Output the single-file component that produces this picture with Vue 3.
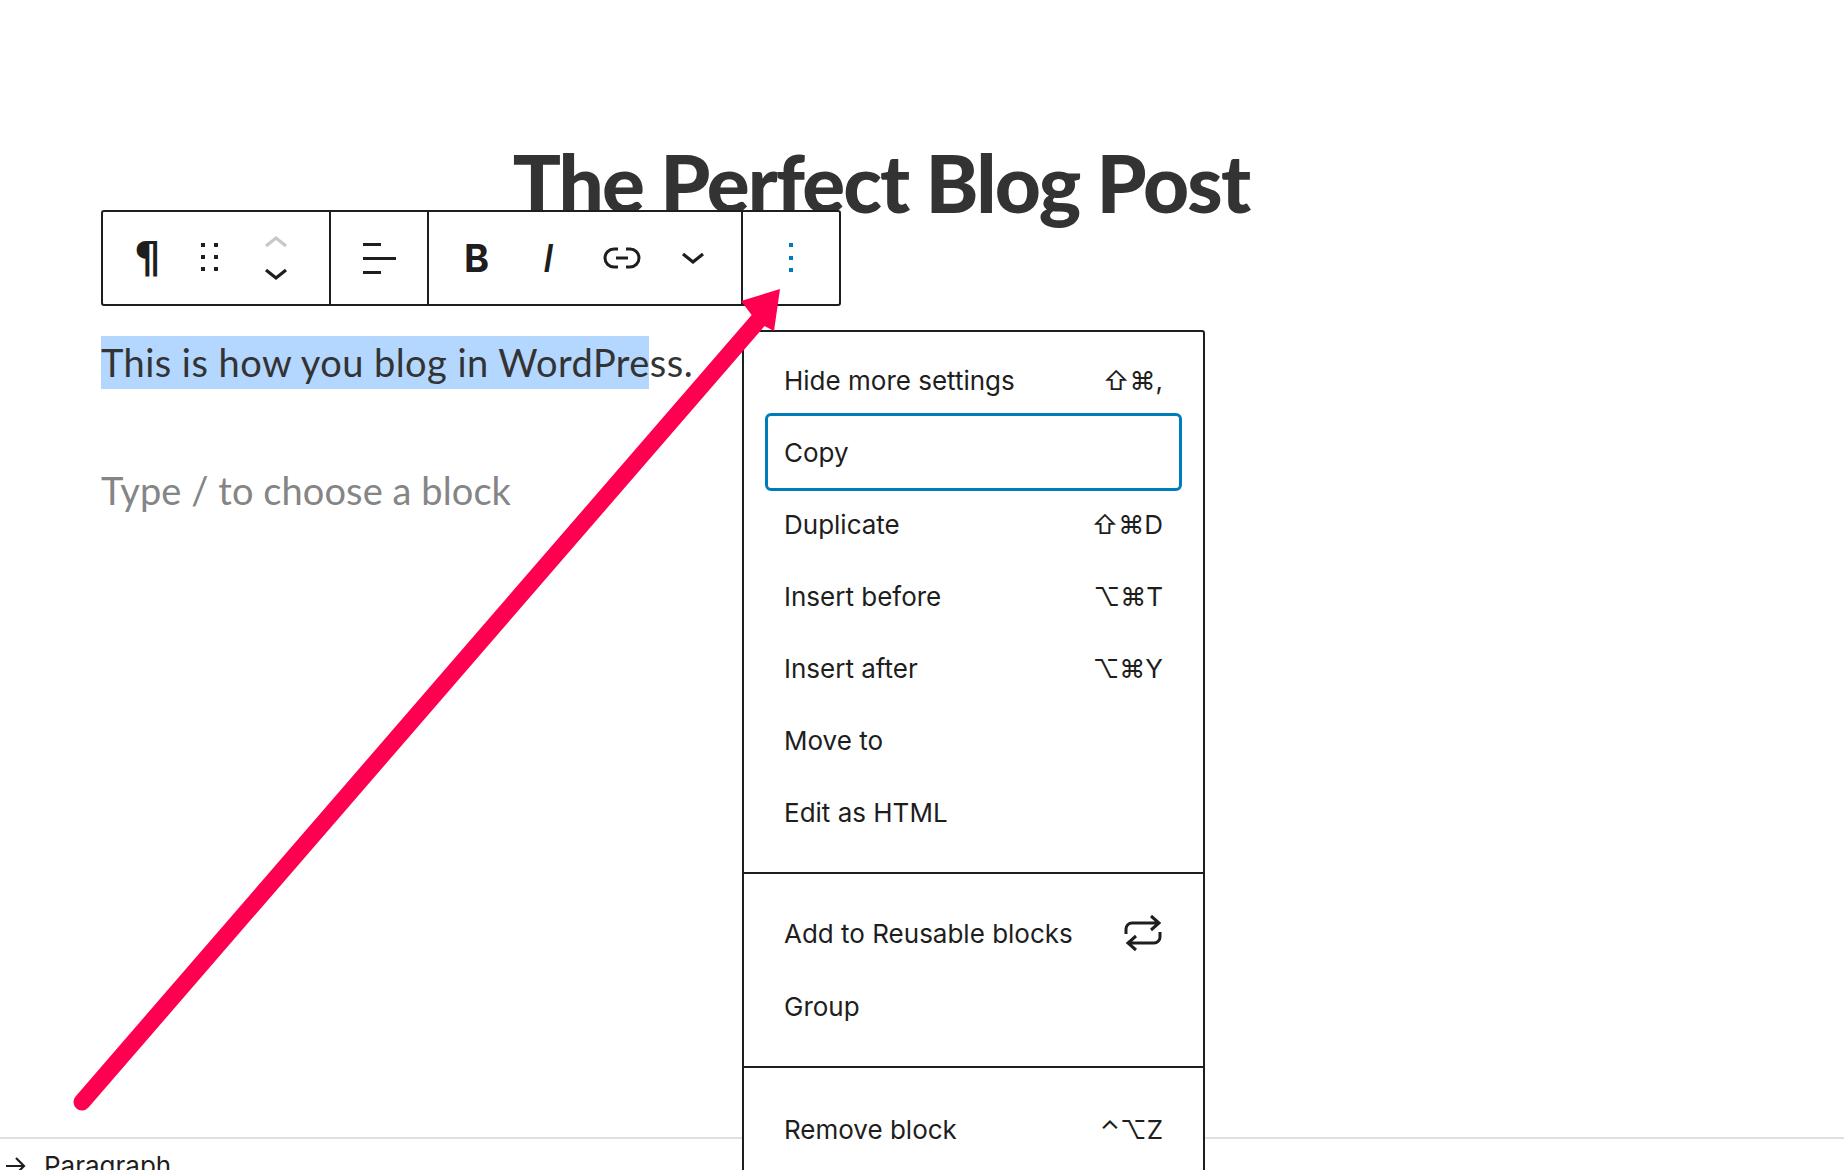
<script setup>
const menuGroups = [
  [
    { label: 'Hide more settings', keys: '⇧⌘,' },
    { label: 'Copy', keys: '', focused: true },
    { label: 'Duplicate', keys: '⇧⌘D' },
    { label: 'Insert before', keys: '⌥⌘T' },
    { label: 'Insert after', keys: '⌥⌘Y' },
    { label: 'Move to', keys: '' },
    { label: 'Edit as HTML', keys: '' }
  ],
  [
    { label: 'Add to Reusable blocks', keys: '', repeat: true },
    { label: 'Group', keys: '' }
  ],
  [
    { label: 'Remove block', keys: '⌃⌥Z' }
  ]
]
</script>

<template>
  <div class="page">
    <main class="editor">
      <h1 class="title">The Perfect Blog Post</h1>

      <div class="toolbar">
        <div class="tool-group group-block">
          <span class="glyph pilcrow">¶</span>
          <svg class="grip" width="17" height="30" viewBox="0 0 17 30" fill="#1e1e1e">
            <rect x="0" y="0" width="4" height="4" /><rect x="13" y="0" width="4" height="4" />
            <rect x="0" y="12" width="4" height="4" /><rect x="13" y="12" width="4" height="4" />
            <rect x="0" y="24" width="4" height="4" /><rect x="13" y="24" width="4" height="4" />
          </svg>
          <svg class="mover" width="24" height="46" viewBox="0 0 24 46" fill="none" stroke-width="3.200">
            <path d="M2 11 12 3l10 8" stroke="#c8c8c8" />
            <path d="M2 35l10 8 10-8" stroke="#1e1e1e" />
          </svg>
        </div>
        <div class="tool-group group-align">
          <svg width="34" height="32" viewBox="0 0 34 32" fill="#1e1e1e">
            <rect x="0" y="1" width="18" height="3" />
            <rect x="0" y="15" width="33" height="3" />
            <rect x="0" y="29" width="18" height="3" />
          </svg>
        </div>
        <div class="tool-group group-format">
          <span class="glyph bold">B</span>
          <span class="glyph italic">I</span>
          <svg class="link" width="38" height="24" viewBox="0 0 38 24" fill="none" stroke="#1e1e1e" stroke-width="3">
            <path d="M15 3H11a9 9 0 0 0 0 18h4" />
            <path d="M23 3h4a9 9 0 0 1 0 18h-4" />
            <path d="M13 12h12" />
          </svg>
          <svg class="more" width="24" height="12" viewBox="0 0 24 12" fill="none" stroke="#1e1e1e" stroke-width="3.200">
            <path d="M2 2l10 8 10-8" />
          </svg>
        </div>
        <div class="tool-group group-options">
          <svg width="4" height="30" viewBox="0 0 4 30" fill="#007cba">
            <rect x="0" y="0" width="4" height="4" />
            <rect x="0" y="13" width="4" height="4" />
            <rect x="0" y="25" width="4" height="4" />
          </svg>
        </div>
      </div>

      <p class="paragraph">This is how you blog in WordPress.</p>
      <p class="placeholder">Type / to choose a block</p>
    </main>

    <footer class="breadcrumb">
      <svg width="20" height="18" viewBox="0 0 20 18" fill="none" stroke="#1e1e1e" stroke-width="2.200">
        <path d="M0 9h18M10 1l8 8-8 8" />
      </svg>
      <span>Paragraph</span>
    </footer>

    <div class="menu">
      <div v-for="(group, i) in menuGroups" :key="i" class="menu-group">
        <div v-for="item in group" :key="item.label" class="menu-item" :class="{ focused: item.focused }">
          <span>{{ item.label }}</span>
          <span v-if="item.keys" class="keys">{{ item.keys }}</span>
          <svg v-if="item.repeat" class="repeat" width="38" height="38" viewBox="0 0 38 38" fill="none" stroke="#1e1e1e" stroke-width="3">
            <path d="M2 20v-5a6 6 0 0 1 6-6h27M27 2l8 7-8 7" />
            <path d="M36 18v5a6 6 0 0 1-6 6H4M12 22l-8 7 8 7" />
          </svg>
        </div>
      </div>
    </div>

    <svg class="arrow" width="1844" height="1170" viewBox="0 0 1844 1170">
      <path d="M82 1102 762 316" stroke="#ff0050" stroke-width="17" stroke-linecap="round" fill="none" />
      <path d="M780 289 741 301 757 322 774 331Z" fill="#ff0050" />
    </svg>
  </div>
</template>

<style>
html, body {
  margin: 0;
  background: #fff;
}
</style>

<style scoped>
.page {
  position: relative;
  width: 1844px;
  height: 1170px;
  overflow: hidden;
  display: flex;
  flex-direction: column;
  background: #fff;
  color: #1e1e1e;
  font-family: Inter, "DejaVu Sans", sans-serif;
}

.editor {
  flex: 1;
  padding: 0 0 0 101px;
  min-height: 0;
}

.title {
  width: 1560px;
  margin: 0;
  padding-top: 132px;
  text-align: center;
  font-family: Lato, sans-serif;
  font-size: 80px;
  font-weight: 900;
  letter-spacing: -1.850px;
  line-height: 100px;
  color: #333;
}

.toolbar {
  position: relative;
  display: flex;
  width: 740px;
  height: 96px;
  margin-top: -22px;
  box-sizing: border-box;
  border: 2px solid #1e1e1e;
  border-radius: 3px;
  background: #fff;
}

.tool-group {
  display: flex;
  align-items: center;
  height: 100%;
  box-sizing: border-box;
  border-right: 2px solid #1e1e1e;
}

.group-block {
  width: 228px;
  padding-left: 31px;
}

.group-align {
  width: 98px;
  padding-left: 32px;
}

.group-format {
  width: 314px;
  padding-left: 35px;
}

.group-options {
  flex: 1;
  border-right: 0;
  padding-left: 46px;
}

.glyph {
  line-height: 1;
  color: #1e1e1e;
}

.pilcrow {
  font-family: "DejaVu Sans", sans-serif;
  font-weight: 700;
  font-size: 42px;
  width: 31px;
}

.grip {
  margin-left: 36px;
}

.mover {
  margin-left: 46px;
}

.bold {
  font-family: Inter, sans-serif;
  font-weight: 700;
  font-size: 38px;
  width: 26px;
}

.italic {
  font-family: Inter, sans-serif;
  font-style: italic;
  font-weight: 500;
  font-size: 38px;
  margin-left: 53px;
  width: 20px;
}

.link {
  margin-left: 40px;
}

.more {
  margin-left: 40px;
}

.paragraph,
.placeholder {
  margin: 0;
  font-family: Lato, sans-serif;
  font-size: 38px;
  line-height: 53px;
  color: #333;
}

.paragraph {
  width: max-content;
  margin-top: 30px;
  letter-spacing: 0.450px;
  background: linear-gradient(#b3d7fe, #b3d7fe) no-repeat 0 0 / 548px 100%;
}

.placeholder {
  margin-top: 75px;
  letter-spacing: 0.080px;
  color: #858585;
}

.breadcrumb {
  display: flex;
  align-items: flex-start;
  gap: 18px;
  height: 33px;
  padding: 11px 0 0 6px;
  box-sizing: border-box;
  overflow: hidden;
  border-top: 2px solid #e0e0e0;
  font-size: 26px;
  line-height: 32px;
}

.breadcrumb svg {
  margin-top: 7px;
}

.menu {
  position: absolute;
  left: 742px;
  top: 330px;
  width: 463px;
  box-sizing: border-box;
  border: 2px solid #1e1e1e;
  border-radius: 3px;
  background: #fff;
}

.menu-group {
  padding: 23px 21px 24px;
}

.menu-group:first-child {
  padding-top: 12px;
}

.menu-group:last-child {
  padding-top: 25px;
}

.menu-group + .menu-group {
  border-top: 2px solid #1e1e1e;
}

.menu-item {
  display: flex;
  align-items: center;
  justify-content: space-between;
  height: 72px;
  box-sizing: border-box;
  padding: 0 19px;
  font-size: 26px;
}

.menu-item + .menu-item {
  margin-top: 0;
}

.menu-group:nth-child(2) .menu-item + .menu-item {
  margin-top: 1px;
}

.menu-item.focused {
  height: 78px;
  margin: -3px 0;
  border: 3px solid #007cba;
  border-radius: 6px;
  padding: 0 16px;
}

.keys {
  font-size: 26px;
}

.repeat {
  margin-right: 1px;
}

.arrow {
  position: absolute;
  left: 0;
  top: 0;
  pointer-events: none;
}
</style>
